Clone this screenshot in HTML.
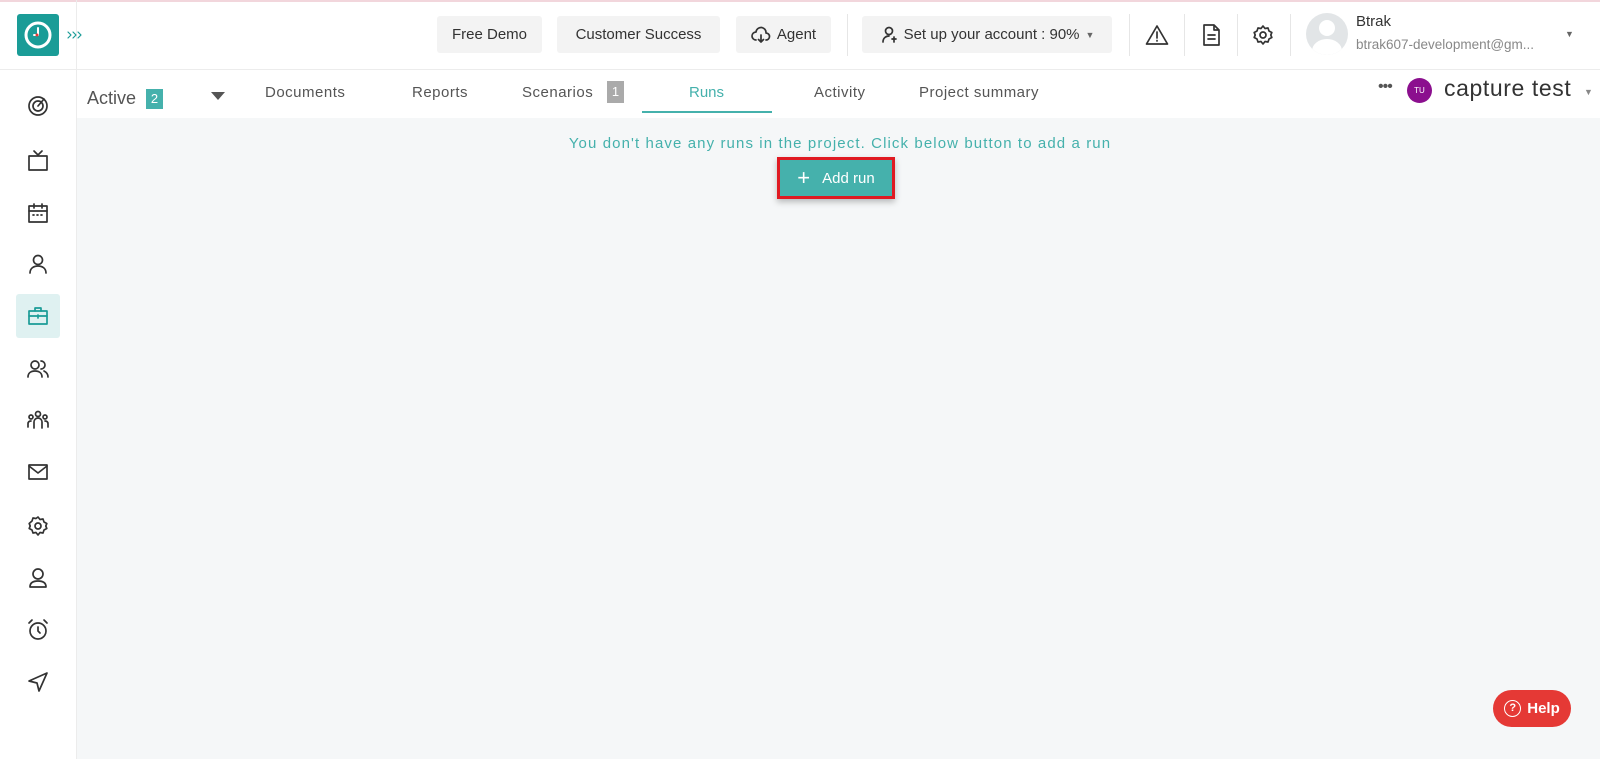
<!DOCTYPE html>
<html><head><meta charset="utf-8"><style>
*{box-sizing:border-box;margin:0;padding:0}
body{width:1600px;height:759px;overflow:hidden;font-family:"Liberation Sans",sans-serif;background:#fff;position:relative;color:#333}
.abs{position:absolute}
.btn{position:absolute;top:16px;height:37px;background:#f3f3f3;border-radius:3px;font-size:15px;color:#333;display:flex;align-items:center;justify-content:center}
.vd{position:absolute;top:14px;width:1px;height:42px;background:#e6e6e6}
.tab{position:absolute;top:84px;font-size:15px;color:#555}
.si{position:absolute;left:26px;width:24px;height:24px}
svg{fill:none;stroke:#333;stroke-width:1.7;stroke-linecap:round;stroke-linejoin:round}
</style></head><body>
<div class="abs" style="left:0;top:0;width:1600px;height:2px;background:#f2d6dc"></div>
<div class="abs" style="left:0;top:69px;width:1600px;height:1px;background:#ececec"></div>
<div class="abs" style="left:76px;top:0;width:1px;height:759px;background:#ececec"></div>
<div class="abs" style="left:77px;top:118px;width:1523px;height:641px;background:#f5f7f8"></div>
<!-- logo -->
<div class="abs" style="left:17px;top:14px;width:42px;height:42px;background:#1a9c97;border-radius:3px"></div>
<svg class="abs" style="left:17px;top:14px" width="42" height="42"><circle cx="21" cy="21" r="12" stroke="#fff" stroke-width="3"/><path d="M21 14v7h-4" stroke="#fff" stroke-width="2"/><circle cx="20" cy="21" r="1.5" fill="#e53935" stroke="none"/></svg>
<svg class="abs" style="left:66px;top:30px" width="18" height="10"><path d="M2 2l3 3-3 3M7 2l3 3-3 3M12 2l3 3-3 3" stroke="#1a9c97" stroke-width="1.2"/></svg>
<!-- header -->
<div class="btn" style="left:437px;width:105px">Free Demo</div>
<div class="btn" style="left:557px;width:163px">Customer Success</div>
<div class="btn" style="left:736px;width:95px"><svg width="20" height="18" style="margin-right:6px"><path d="M5 14a4 4 0 0 1 0-8 5 5 0 0 1 10 1 3.5 3.5 0 0 1 0 7M10 9v7M7.5 13.5 10 16l2.5-2.5"/></svg>Agent</div>
<div class="vd" style="left:847px"></div>
<div class="btn" style="left:862px;width:250px"><svg width="20" height="20" style="margin-right:4px"><circle cx="9" cy="6" r="3.5"/><path d="M3 17c0-4 3-6 6-6M14 12v5M12 14h4"/></svg>Set up your account : 90% <span style="font-size:9px;margin-left:6px;color:#666">▼</span></div>
<div class="vd" style="left:1129px"></div><div class="vd" style="left:1184px"></div><div class="vd" style="left:1237px"></div><div class="vd" style="left:1290px"></div>
<svg class="abs" style="left:1145px;top:24px" width="24" height="22"><path d="M12 2 1.5 20h21z"/><path d="M12 8v6M12 16.5v.5"/></svg>
<svg class="abs" style="left:1200px;top:23px" width="22" height="24"><path d="M4 2h10l5 5v15H4z M14 2v5h5M8 12h7M8 16h7"/></svg>
<svg class="abs" style="left:1252px;top:24px" width="22" height="22"><circle cx="11" cy="11" r="3"/><path d="M11 2l2 2.5 3-.5 1 3 2.8 1.5-1 2.5 1 2.5-2.8 1.5-1 3-3-.5-2 2.5-2-2.5-3 .5-1-3L2.2 13.5l1-2.5-1-2.5L5 7l1-3 3 .5z"/></svg>
<div class="abs" style="left:1306px;top:13px;width:42px;height:42px;border-radius:50%;background:#e2e5e7;overflow:hidden"><div class="abs" style="left:13px;top:7px;width:16px;height:16px;border-radius:50%;background:#fff"></div><div class="abs" style="left:6px;top:26px;width:30px;height:24px;border-radius:50%;background:#fff"></div></div>
<div class="abs" style="left:1356px;top:13px;font-size:15px;color:#333">Btrak</div>
<div class="abs" style="left:1356px;top:37px;font-size:13.5px;color:#888">btrak607-development@gm...</div>
<div class="abs" style="left:1565px;top:29px;font-size:9px;color:#666">▼</div>
<!-- second row -->
<div class="abs" style="left:87px;top:88px;font-size:18px;color:#555">Active</div>
<div class="abs" style="left:146px;top:89px;width:17px;height:20px;background:#45b1ac;color:#fff;font-size:13px;text-align:center;line-height:20px">2</div>
<div class="abs" style="left:211px;top:92px;width:0;height:0;border-left:7px solid transparent;border-right:7px solid transparent;border-top:8px solid #555"></div>
<div class="tab" style="left:265px;letter-spacing:0.5px">Documents</div>
<div class="tab" style="left:412px;letter-spacing:0.5px">Reports</div>
<div class="tab" style="left:522px;letter-spacing:0.5px">Scenarios</div>
<div class="abs" style="left:607px;top:81px;width:17px;height:22px;background:#aaa;color:#fff;font-size:13px;text-align:center;line-height:22px">1</div>
<div class="tab" style="left:689px;color:#45b1ac">Runs</div>
<div class="abs" style="left:642px;top:111px;width:130px;height:2px;background:#45b1ac"></div>
<div class="tab" style="left:814px;letter-spacing:0.5px">Activity</div>
<div class="tab" style="left:919px;letter-spacing:0.5px">Project summary</div>
<div class="abs" style="left:1378px;top:78px;font-size:16px;color:#555;letter-spacing:-1px">•••</div>
<div class="abs" style="left:1407px;top:78px;width:25px;height:25px;border-radius:50%;background:#8b0f8e;color:#fff;font-size:8px;text-align:center;line-height:25px">TU</div>
<div class="abs" style="left:1444px;top:75px;font-size:23px;color:#333;letter-spacing:0.6px">capture test</div>
<div class="abs" style="left:1584px;top:87px;font-size:9px;color:#888">▼</div>
<!-- content -->
<div class="abs" style="left:0;width:1680px;top:135px;text-align:center;font-size:15px;color:#45b1ac;letter-spacing:1.1px">You don't have any runs in the project. Click below button to add a run</div>
<div class="abs" style="left:777px;top:157px;width:118px;height:42px;border:3px solid #e01a22;box-shadow:0 3px 6px rgba(0,0,0,.25)"><div style="width:100%;height:100%;background:#45b1ac;color:#fff;font-size:15px;display:flex;align-items:center;justify-content:center"><span style="font-size:22px;margin-right:12px;line-height:1">+</span>Add run</div></div>
<div class="abs" style="left:1493px;top:690px;width:78px;height:37px;border-radius:19px;background:#e53935;color:#fff;font-weight:bold;font-size:15px;display:flex;align-items:center;justify-content:center"><span style="display:inline-block;width:17px;height:17px;border:1.5px solid #fff;border-radius:50%;font-size:11px;text-align:center;line-height:14px;margin-right:6px">?</span>Help</div>
<!-- sidebar -->
<div class="abs" style="left:16px;top:294px;width:44px;height:44px;background:#dff1f1;border-radius:3px"></div>
<svg class="si" style="top:94px"><circle cx="12" cy="12" r="9"/><circle cx="12" cy="12" r="5"/><path d="M12 12 18 5"/></svg>
<svg class="si" style="top:149px"><rect x="3" y="7" width="18" height="14"/><path d="M8 2l4 4 4-4"/></svg>
<svg class="si" style="top:201px"><rect x="3" y="5" width="18" height="16"/><path d="M3 10h18M8 3v4M16 3v4M7 14h1M11 14h1M15 14h1"/></svg>
<svg class="si" style="top:252px"><circle cx="12" cy="8" r="4.5"/><path d="M4 21c0-5 4-7 8-7s8 2 8 7"/></svg>
<svg class="si" style="top:304px;stroke:#1a9c97"><rect x="3" y="7" width="18" height="13"/><path d="M9 7V4h6v3M3 12h18M12 11v3"/></svg>
<svg class="si" style="top:357px"><circle cx="9" cy="8" r="4"/><path d="M2 20c0-4 3-6 7-6s7 2 7 6M15 4a4 4 0 0 1 0 8M18 14c2 1 4 3 4 6"/></svg>
<svg class="si" style="top:408px"><circle cx="12" cy="6" r="2.5"/><circle cx="5" cy="9" r="2"/><circle cx="19" cy="9" r="2"/><path d="M8 20v-6a4 4 0 0 1 8 0v6M2 19v-3c0-2 1-3 3-3M22 19v-3c0-2-1-3-3-3"/></svg>
<svg class="si" style="top:460px"><rect x="3" y="5" width="18" height="14"/><path d="M3 6l9 7 9-7"/></svg>
<svg class="si" style="top:514px"><circle cx="12" cy="12" r="3"/><path d="M12 3l2 2.5 3-.5 1 3 2.8 1.5-1 2.5 1 2.5-2.8 1.5-1 3-3-.5-2 2.5-2-2.5-3 .5-1-3L3.2 14.5l1-2.5-1-2.5L6 7l1-3 3 .5z"/></svg>
<svg class="si" style="top:566px"><circle cx="12" cy="8" r="5"/><path d="M4 21c0-4 3-6 8-6s8 2 8 6z"/></svg>
<svg class="si" style="top:618px"><circle cx="12" cy="13" r="8"/><path d="M12 9v4l2 2M3 5l3-3M21 5l-3-3"/></svg>
<svg class="si" style="top:670px"><path d="M21 3 3 11l8 2 2 8z"/></svg>
</body></html>
